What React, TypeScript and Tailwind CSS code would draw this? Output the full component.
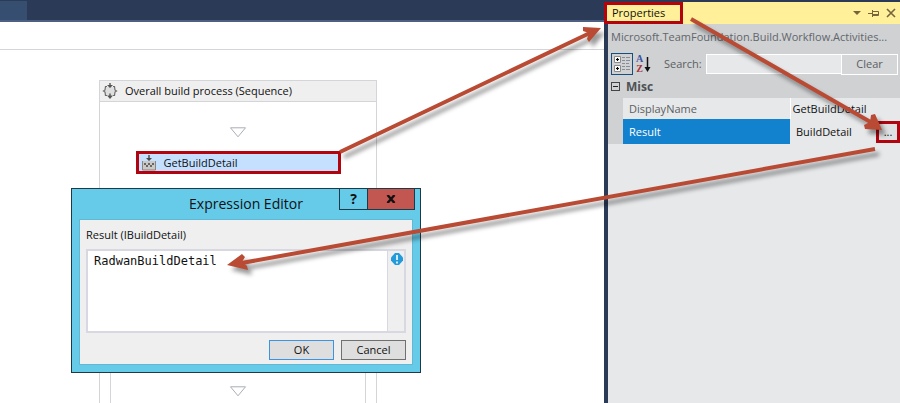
import type { ReactNode } from "react";

function DropMarker() {
  return (
    <svg className="block h-[11px] w-[18px]" viewBox="0 0 18 11" fill="#fff" stroke="#a9adb6" aria-hidden="true">
      <path d="M1.5 .8h15L9 9.8z" />
    </svg>
  );
}

function SequenceIcon() {
  return (
    <svg className="size-4 shrink-0" viewBox="0 0 16 16" aria-hidden="true">
      <path d="M3 4h10v8H3z" fill="#dedede" />
      <path d="M5 3.500H3.500L3 7 1.500 8 3 9l.5 3.500H5M11 3.500h1.500L13 7l1.500 1L13 9l-.5 3.500H11" fill="none" stroke="#6d6d6d" strokeWidth="1.200" />
      <path d="M7.300 0h1.400v2H11L8 5 5 2h2.300zM7.300 10.500h1.400V12.500H11l-3 3.500-3-3.500h2.300z" fill="#555" />
    </svg>
  );
}

function ActivityIcon() {
  return (
    <svg className="size-4 shrink-0" viewBox="0 0 16 16" aria-hidden="true">
      <path d="M1.500 6v9h13V6" fill="#c9c9c9" stroke="#8a857d" />
      <path d="M7.300 0h1.400v3H11L8 6 5 3h2.300z" fill="#484848" />
      <path d="M3 8h2v2H3zM7 8h2v2H7zM11 8h2v2h-2zM5 10h2v2H5zM9 10h2v2H9z" fill="#6a665f" />
    </svg>
  );
}

function CategorizedIcon() {
  return (
    <svg className="size-[18px]" viewBox="0 0 18 18" fill="none" aria-hidden="true">
      <path d="M1.500 1.500h6v6h-6zM1.500 10.500h6v6h-6z" fill="#fff" stroke="#8a8a8a" />
      <path d="M3 4.500h3M4.500 3v3M3 13.500h3M4.500 12v3" stroke="#000" strokeWidth="1.200" />
      <path d="M9 2.500h3m1 0h4M9 5.500h3m1 0h4M9 8.500h3m1 0h3M9 11.500h3m1 0h4M9 14.500h3m1 0h4" stroke="#888c98" />
    </svg>
  );
}

function SortIcon() {
  return (
    <span className="flex h-5 w-4 items-center gap-px">
      <span className="flex flex-col font-['Liberation_Serif',serif] text-[10px] leading-[10px] font-bold">
        <span className="text-[#3b53a4]">A</span>
        <span className="text-[#a8323a]">Z</span>
      </span>
      <svg className="h-[15px] w-[7px] shrink-0" viewBox="0 0 7 15" aria-hidden="true">
        <path d="M3.500 0v12" stroke="#111" strokeWidth="1.500" />
        <path d="M0.500 10h6l-3 5z" fill="#111" />
      </svg>
    </span>
  );
}

function Designer() {
  return (
    <main className="flex min-w-0 flex-1 flex-col overflow-hidden bg-white">
      <div className="h-[22px] shrink-0 border-b-2 border-[#4d6082] bg-[#2b3a56] pt-px">
        <div className="h-[19px] w-[27px] bg-[#364e6f]" />
      </div>
      <div className="h-7 shrink-0 border-b border-[#d3d5d8]" />
      <section className="mt-[30px] ml-[99px] flex w-[278px] flex-1 flex-col border border-b-0 border-[#d3d5d8]">
        <header className="flex h-[21px] shrink-0 items-center gap-[7px] border-b border-[#d3d5d8] bg-[#efefef] pl-[2px]">
          <SequenceIcon />
          <h2>Overall build process (Sequence)</h2>
        </header>
        <div className="flex flex-1 flex-col items-center pt-[25px]">
          <DropMarker />
          <div className="mt-[13px] flex h-[23px] w-[205px] shrink-0 items-center gap-[7px] border-3 border-[#b1040e] bg-[#c5e0ff] pl-[2px]">
            <ActivityIcon />
            <span>GetBuildDetail</span>
          </div>
          <div className="mt-10 flex w-[256px] flex-1 flex-col items-center border border-b-0 border-[#d3d5d8] pt-[171px]">
            <DropMarker />
          </div>
        </div>
      </section>
    </main>
  );
}

function PropertyRow({ name, selected, children }: { name: string; selected?: boolean; children: ReactNode }) {
  return (
    <tr className={selected ? "h-[25px]" : "h-[21px]"}>
      <th
        scope="row"
        className={
          selected
            ? "w-[167px] bg-[#1382ce] p-0 pl-[6px] text-left font-normal text-white"
            : "w-[167px] border-r border-white bg-[#e6e8ea] p-0 pl-[6px] text-left font-normal text-[#5c5f62]"
        }
      >
        {name}
      </th>
      <td className="bg-[#e6e8ea] p-0">{children}</td>
    </tr>
  );
}

function Properties() {
  return (
    <aside className="flex w-[296px] shrink-0 flex-col border-l-4 border-[#2b3a56] bg-[#cfd1d3]">
      <header className="-ml-1 flex h-6 shrink-0 items-center border-t-2 border-[#2b3a56] bg-[#fff099]">
        <h2 className="flex h-[22px] w-[79px] items-center border-3 border-[#b1040e] pl-[5px]">Properties</h2>
        <div className="ml-auto flex items-center gap-[7px] pr-1 text-[#75633d]">
          <button aria-label="Window position">
            <svg className="block h-3 w-2" viewBox="0 0 8 12"><path d="M0 4h8L4 8z" fill="currentColor" /></svg>
          </button>
          <button aria-label="Auto hide">
            <svg className="block h-3 w-[11px]" viewBox="0 0 11 12" fill="none" stroke="currentColor">
              <path d="M0 6.500h4M4.500 3v7M5 4.500h5.500v4H5M5 7.500h5" />
            </svg>
          </button>
          <button aria-label="Close">
            <svg className="block h-3 w-[10px]" viewBox="0 0 10 12"><path d="m1 2 8 8m0-8-8 8" stroke="currentColor" strokeWidth="1.600" /></svg>
          </button>
        </div>
      </header>
      <p className="mt-1 pl-[3px] leading-[18px] whitespace-nowrap text-[#62666b]">
        Microsoft.TeamFoundation.Build.Workflow.Activities...
      </p>
      <div className="mt-[7px] flex h-[22px] shrink-0 items-center pr-[2px] pl-[3px]">
        <button aria-label="Categorized" className="flex size-[22px] items-center justify-center border border-[#164f7f]">
          <CategorizedIcon />
        </button>
        <button aria-label="Sort alphabetically" className="ml-[3px]">
          <SortIcon />
        </button>
        <label htmlFor="search" className="ml-3 w-[42px] text-[#5c5f62]">Search:</label>
        <input id="search" className="h-5 min-w-0 flex-1 border border-white bg-[#e6e8ea] px-1 outline-none" />
        <button className="-ml-px h-[21px] w-[57px] border border-white bg-[#d4d6d8] text-[#5c5f62]">Clear</button>
      </div>
      <div className="flex h-[23px] shrink-0 items-center gap-[6px] pl-[3px]">
        <button aria-label="Collapse Misc" className="flex size-[9px] items-center justify-center border border-[#444]">
          <span className="h-px w-[5px] bg-[#222]" />
        </button>
        <h3 className="text-[12px] font-bold text-[#4e5155]">Misc</h3>
      </div>
      <div className="pl-[15px]">
        <table className="w-full table-fixed border-collapse">
          <tbody>
            <PropertyRow name="DisplayName">
              <span className="pl-[2px]">GetBuildDetail</span>
            </PropertyRow>
            <PropertyRow name="Result" selected>
              <div className="flex items-center justify-between pl-[6px]">
                <span>BuildDetail</span>
                <button aria-label="Edit expression" className="h-[22px] w-6 border-3 border-[#b1040e] bg-[#dfe0e2] leading-4">
                  ...
                </button>
              </div>
            </PropertyRow>
          </tbody>
        </table>
      </div>
      <div className="flex-1 bg-[#e6e8ea]" />
    </aside>
  );
}

function ExpressionEditor() {
  return (
    <div
      role="dialog"
      aria-labelledby="editor-title"
      className="absolute top-[188px] left-[71px] w-[350px] border border-[#1d3b47] bg-[#66cae9] px-[7px] pb-[7px]"
    >
      <div className="relative flex h-[30px] items-center justify-center">
        <h1 id="editor-title" className="text-[14px]">Expression Editor</h1>
        <div className="absolute -top-px -right-[2px] flex h-[22px] border border-[#1d3b47] font-bold">
          <button aria-label="Help" className="w-[27px] text-[14px]">?</button>
          <button aria-label="Close" className="flex w-[47px] items-center justify-center border-l border-[#1d3b47] bg-[#c25650]">
            <svg className="h-2 w-[10px]" viewBox="0 0 10 8" aria-hidden="true"><path d="m1.500 0 7 8m0-8-7 8" stroke="#111" strokeWidth="2.400" /></svg>
          </button>
        </div>
      </div>
      <div className="border border-[#62b8d2] bg-[#efefef] px-[6px] pb-1">
        <label htmlFor="expression" className="flex h-[29px] items-center">Result (IBuildDetail)</label>
        <div className="flex h-[84px] border-2 border-[#d8d8e2]">
          <textarea
            id="expression"
            defaultValue="RadwanBuildDetail"
            className="block min-w-0 flex-1 resize-none bg-white px-[6px] py-[2px] font-['DejaVu_Sans_Mono',monospace] text-[12px] leading-4 outline-none"
          />
          <div className="w-[17px] border-l border-[#d8d8e2] pt-[2px] pl-[3px]">
            <svg className="h-3 w-3" viewBox="0 0 12 12" aria-hidden="true">
              <path d="M4 0h4l4 4.500v3L8 12H4L0 7.500v-3z" fill="#239bdb" />
              <path d="M6 2v5M6 8.500v2" stroke="#fff" strokeWidth="1.600" />
            </svg>
          </div>
        </div>
        <div className="mt-[7px] flex justify-end gap-[7px]">
          <button className="h-5 w-[65px] border border-[#3c93e0] bg-[#dedede] leading-4">OK</button>
          <button className="h-5 w-[65px] border border-[#707070] bg-[#dedede] leading-4">Cancel</button>
        </div>
      </div>
    </div>
  );
}

function Arrows() {
  return (
    <svg
      className="pointer-events-none absolute top-0 left-0 h-[403px] w-[900px] drop-shadow-[4px_5px_2px_rgba(0,0,0,0.4)]"
      viewBox="0 0 900 403"
      fill="#b94a33"
      stroke="#b94a33"
      strokeWidth="4"
      aria-hidden="true"
    >
      <path d="M340 152 592 32M691 19l183 105M875 149 236 264" />
      <path stroke="none" d="M601 28l-18-1v4l6 2-2 6 2 3zM882 130l-7-16-4 1-1 7-6 3 1 4zM227 265l15-11 3 3-3 5 5 4 1 4z" />
    </svg>
  );
}

export default function App() {
  return (
    <div className="relative flex h-screen min-h-[403px] overflow-hidden font-['Open_Sans','Noto_Sans',sans-serif] text-[11px] leading-4 text-[#111]">
      <Designer />
      <Properties />
      <ExpressionEditor />
      <Arrows />
    </div>
  );
}
